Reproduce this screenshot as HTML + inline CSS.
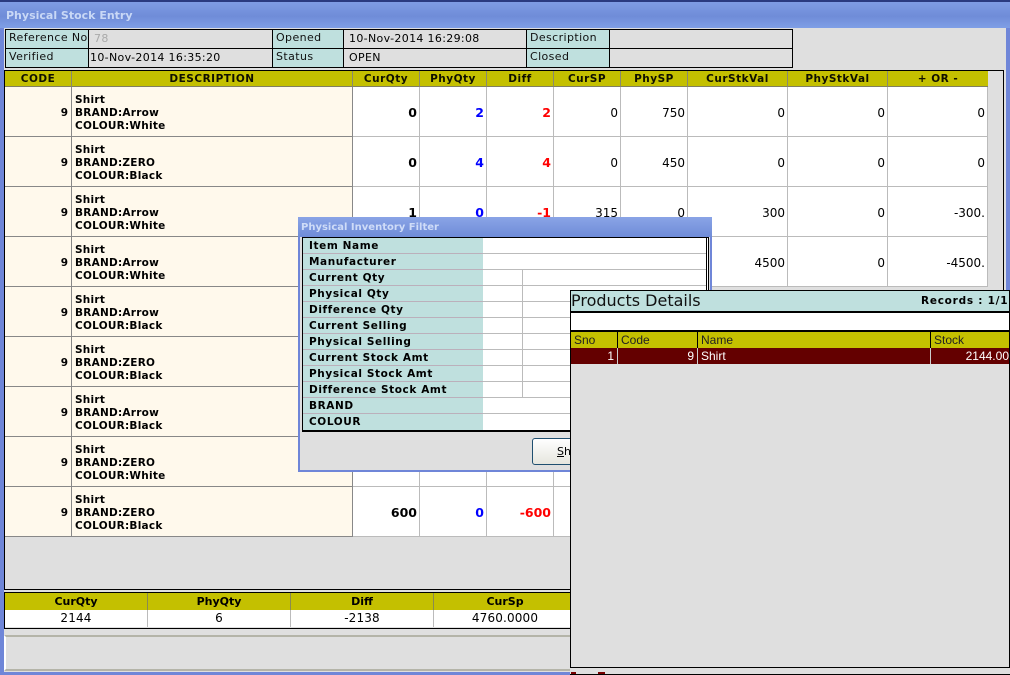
<!DOCTYPE html>
<html><head><meta charset="utf-8"><style>
*{box-sizing:border-box}
html,body{margin:0;padding:0;width:1010px;height:675px;overflow:hidden;background:#dfdfdf}
body{position:relative;font:11px "DejaVu Sans","Liberation Sans",sans-serif;color:#000}
div{position:absolute;white-space:nowrap}
.h{background:#c4c000;font-weight:bold;text-align:center;font-size:10.5px;line-height:17px;height:16px;top:71px;border-right:1px solid #8a8a70;border-bottom:1px solid #807f60;letter-spacing:.5px;color:#101000}
.c{height:50px;border-right:1px solid #bbb;border-bottom:1px solid #bbb;background:#fff;text-align:right;padding-right:2px;line-height:52px;font-size:12px}
.b{font-weight:bold;font-size:12.5px}
.d{background:#fff9ec;border-color:#888;color:#000}
.t{font-weight:bold;font-size:10.5px;line-height:13px;text-align:left;padding:6.5px 0 0 3px;letter-spacing:.25px}
.n{font-size:10.5px;padding-right:3px}
.k{font-size:11px;line-height:15px;padding-left:3px;border:1px solid #000;height:20px;letter-spacing:.4px}
.l{background:#bfe0de;color:#111}
.v{background:#dfdfdf;line-height:17px;padding-left:5px;letter-spacing:.33px}
.f{left:303px;width:180px;height:16px;background:#bfe0de;border-bottom:1px solid #bbb0bb;font-weight:bold;font-size:10.5px;line-height:17px;padding-left:6px;letter-spacing:.6px}
.g{left:483px;width:223px;height:16px;background:#fff;border-bottom:1px solid #bbb}
.y{background:#c4c000;color:#222;top:332px;height:16px;line-height:16px;padding-left:3px;border-right:1px solid #000;font-family:"Liberation Sans",sans-serif;font-size:12px}
.m{background:#640000;color:#fff;top:348px;height:16px;line-height:16px;font-family:"Liberation Sans",sans-serif;font-size:12px;border-right:1px solid #ccc}
.s{top:593px;height:17px;width:143px;background:#c4c000;font-weight:bold;font-size:11px;text-align:center;line-height:17px;border-right:1px solid #8a8a50}
.u{top:610px;height:17px;width:143px;background:#fff;text-align:center;line-height:17px;border-right:1px solid #bbb;font-size:12px;letter-spacing:.15px}
</style></head><body>
<div style="left:0;top:0;width:1010px;height:28px;background:linear-gradient(#7f9ce4 0,#6f8cd8 55%,#7f9fe6 100%);border-top:2px solid #2a3a80"></div>
<div style="left:6px;top:8px;color:#c9d8f6;font-weight:bold;font-size:11px;line-height:16px">Physical Stock Entry</div>
<div style="left:0;top:28px;width:4px;height:647px;background:#6f86d8"></div>
<div style="left:1006px;top:28px;width:4px;height:647px;background:#6f86d8"></div>
<div style="left:0;top:672px;width:1010px;height:3px;background:#6f86d8"></div>

<div class="k l" style="left:5px;top:29px;width:84px;">Reference No</div>
<div class="k v" style="left:88px;top:29px;width:185px;color:#aaa">78</div>
<div class="k l" style="left:272px;top:29px;width:72px;">Opened</div>
<div class="k v" style="left:343px;top:29px;width:184px;">10-Nov-2014 16:29:08</div>
<div class="k l" style="left:526px;top:29px;width:84px;">Description</div>
<div class="k v" style="left:609px;top:29px;width:184px;"></div>
<div class="k l" style="left:5px;top:48px;width:84px;">Verified</div>
<div class="k v" style="left:88px;top:48px;width:185px;padding-left:1px">10-Nov-2014 16:35:20</div>
<div class="k l" style="left:272px;top:48px;width:72px;">Status</div>
<div class="k v" style="left:343px;top:48px;width:184px;">OPEN</div>
<div class="k l" style="left:526px;top:48px;width:84px;">Closed</div>
<div class="k v" style="left:609px;top:48px;width:184px;"></div>

<div style="left:4px;top:70px;width:1000px;height:520px;border:1px solid #000"></div>
<div class="h" style="left:5px;width:67px">CODE</div><div class="h" style="left:72px;width:281px">DESCRIPTION</div><div class="h" style="left:353px;width:67px">CurQty</div><div class="h" style="left:420px;width:67px">PhyQty</div><div class="h" style="left:487px;width:67px">Diff</div><div class="h" style="left:554px;width:67px">CurSP</div><div class="h" style="left:621px;width:67px">PhySP</div><div class="h" style="left:688px;width:100px">CurStkVal</div><div class="h" style="left:788px;width:100px">PhyStkVal</div><div class="h" style="left:888px;width:100px;border-right:0">+ OR -</div>

<!-- row 1 -->
<div class="c d b n" style="left:5px;top:87px;width:67px">9</div><div class="c d t" style="left:72px;top:87px;width:281px">Shirt<br>BRAND:Arrow<br>COLOUR:White</div>
<div class="c b" style="left:353px;top:87px;width:67px">0</div><div class="c b" style="left:420px;top:87px;width:67px;color:#00f">2</div><div class="c b" style="left:487px;top:87px;width:67px;color:#f00">2</div><div class="c" style="left:554px;top:87px;width:67px">0</div><div class="c" style="left:621px;top:87px;width:67px">750</div><div class="c" style="left:688px;top:87px;width:100px">0</div><div class="c" style="left:788px;top:87px;width:100px">0</div><div class="c" style="left:888px;top:87px;width:100px">0</div>
<!-- row 2 -->
<div class="c d b n" style="left:5px;top:137px;width:67px">9</div><div class="c d t" style="left:72px;top:137px;width:281px">Shirt<br>BRAND:ZERO<br>COLOUR:Black</div>
<div class="c b" style="left:353px;top:137px;width:67px">0</div><div class="c b" style="left:420px;top:137px;width:67px;color:#00f">4</div><div class="c b" style="left:487px;top:137px;width:67px;color:#f00">4</div><div class="c" style="left:554px;top:137px;width:67px">0</div><div class="c" style="left:621px;top:137px;width:67px">450</div><div class="c" style="left:688px;top:137px;width:100px">0</div><div class="c" style="left:788px;top:137px;width:100px">0</div><div class="c" style="left:888px;top:137px;width:100px">0</div>
<!-- row 3 -->
<div class="c d b n" style="left:5px;top:187px;width:67px">9</div><div class="c d t" style="left:72px;top:187px;width:281px">Shirt<br>BRAND:Arrow<br>COLOUR:White</div>
<div class="c b" style="left:353px;top:187px;width:67px">1</div><div class="c b" style="left:420px;top:187px;width:67px;color:#00f">0</div><div class="c b" style="left:487px;top:187px;width:67px;color:#f00">-1</div><div class="c" style="left:554px;top:187px;width:67px">315</div><div class="c" style="left:621px;top:187px;width:67px">0</div><div class="c" style="left:688px;top:187px;width:100px">300</div><div class="c" style="left:788px;top:187px;width:100px">0</div><div class="c" style="left:888px;top:187px;width:100px">-300.</div>
<!-- row 4 -->
<div class="c d b n" style="left:5px;top:237px;width:67px">9</div><div class="c d t" style="left:72px;top:237px;width:281px">Shirt<br>BRAND:Arrow<br>COLOUR:White</div>
<div class="c" style="left:353px;top:237px;width:67px"></div><div class="c" style="left:420px;top:237px;width:67px"></div><div class="c" style="left:487px;top:237px;width:67px"></div><div class="c" style="left:554px;top:237px;width:67px"></div><div class="c" style="left:621px;top:237px;width:67px"></div><div class="c" style="left:688px;top:237px;width:100px">4500</div><div class="c" style="left:788px;top:237px;width:100px">0</div><div class="c" style="left:888px;top:237px;width:100px">-4500.</div>
<!-- rows 5-8 -->
<div class="c d b n" style="left:5px;top:287px;width:67px">9</div><div class="c d t" style="left:72px;top:287px;width:281px">Shirt<br>BRAND:Arrow<br>COLOUR:Black</div><div class="c" style="left:353px;top:287px;width:67px"></div><div class="c" style="left:420px;top:287px;width:67px"></div><div class="c" style="left:487px;top:287px;width:84px"></div>
<div class="c d b n" style="left:5px;top:337px;width:67px">9</div><div class="c d t" style="left:72px;top:337px;width:281px">Shirt<br>BRAND:ZERO<br>COLOUR:Black</div><div class="c" style="left:353px;top:337px;width:67px"></div><div class="c" style="left:420px;top:337px;width:67px"></div><div class="c" style="left:487px;top:337px;width:84px"></div>
<div class="c d b n" style="left:5px;top:387px;width:67px">9</div><div class="c d t" style="left:72px;top:387px;width:281px">Shirt<br>BRAND:Arrow<br>COLOUR:Black</div><div class="c" style="left:353px;top:387px;width:67px"></div><div class="c" style="left:420px;top:387px;width:67px"></div><div class="c" style="left:487px;top:387px;width:84px"></div>
<div class="c d b n" style="left:5px;top:437px;width:67px">9</div><div class="c d t" style="left:72px;top:437px;width:281px">Shirt<br>BRAND:ZERO<br>COLOUR:White</div><div class="c" style="left:353px;top:437px;width:67px"></div><div class="c" style="left:420px;top:437px;width:67px"></div><div class="c" style="left:487px;top:437px;width:67px"></div><div class="c" style="left:554px;top:437px;width:17px;border-right:0"></div>
<!-- row 9 -->
<div class="c d b n" style="left:5px;top:487px;width:67px">9</div><div class="c d t" style="left:72px;top:487px;width:281px">Shirt<br>BRAND:ZERO<br>COLOUR:Black</div>
<div class="c b" style="left:353px;top:487px;width:67px">600</div><div class="c b" style="left:420px;top:487px;width:67px;color:#00f">0</div><div class="c b" style="left:487px;top:487px;width:67px;color:#f00">-600</div><div class="c" style="left:554px;top:487px;width:17px;border-right:0"></div>

<!-- summary -->
<div style="left:4px;top:592px;width:600px;height:37px;border:1px solid #000"></div>
<div class="s" style="left:5px">CurQty</div><div class="s" style="left:148px">PhyQty</div><div class="s" style="left:291px">Diff</div><div class="s" style="left:434px">CurSp</div>
<div class="u" style="left:5px">2144</div><div class="u" style="left:148px">6</div><div class="u" style="left:291px">-2138</div><div class="u" style="left:434px">4760.0000</div>
<div style="left:4px;top:635px;width:1002px;height:36px;border:2px solid;border-color:#b4b4a8 #fff #b4b4a8 #fff"></div>

<!-- filter dialog -->
<div style="left:298px;top:217px;width:414px;height:255px;background:#dfdfdf;border:2px solid #6f86d8;border-top:0"></div>
<div style="left:298px;top:217px;width:414px;height:20px;background:linear-gradient(#8aa4e6,#6f8cd8)"></div>
<div style="left:301px;top:221px;color:#cfdcf8;font-weight:bold;font-size:10px;line-height:14px">Physical Inventory Filter</div>
<div style="left:302px;top:237px;width:407px;height:195px;background:#fff;border:1px solid #000;border-bottom-width:2px"></div>
<div style="left:706px;top:238px;width:1px;height:192px;background:#000"></div>
<div class="f" style="top:238px">Item Name</div><div class="g" style="top:238px"></div>
<div class="f" style="top:254px">Manufacturer</div><div class="g" style="top:254px"></div>
<div class="f" style="top:270px">Current Qty</div><div class="g" style="top:270px"></div>
<div class="f" style="top:286px">Physical Qty</div><div class="g" style="top:286px"></div>
<div class="f" style="top:302px">Difference Qty</div><div class="g" style="top:302px"></div>
<div class="f" style="top:318px">Current Selling</div><div class="g" style="top:318px"></div>
<div class="f" style="top:334px">Physical Selling</div><div class="g" style="top:334px"></div>
<div class="f" style="top:350px">Current Stock Amt</div><div class="g" style="top:350px"></div>
<div class="f" style="top:366px">Physical Stock Amt</div><div class="g" style="top:366px"></div>
<div class="f" style="top:382px">Difference Stock Amt</div><div class="g" style="top:382px"></div>
<div class="f" style="top:398px">BRAND</div><div class="g" style="top:398px"></div>
<div class="f" style="top:414px;border-bottom:0">COLOUR</div><div class="g" style="top:414px;border-bottom:0"></div>
<div style="left:522px;top:270px;width:1px;height:128px;background:#bbb"></div>
<div style="left:532px;top:438px;width:80px;height:27px;border:1px solid #1f4f70;border-radius:3px;background:linear-gradient(#fff,#e6e6de);font-size:11px;line-height:25px;padding-left:24px"><u>S</u>how</div>

<!-- products popup -->
<div style="left:570px;top:290px;width:440px;height:378px;background:#dfdfdf;border:1px solid #000;border-right:0"></div>
<div style="left:571px;top:291px;width:438px;height:20px;background:#bfe0de;font-size:16px;line-height:19px;color:#111">Products Details</div>
<div style="left:921px;top:294px;font-weight:bold;font-size:10.5px;line-height:14px;letter-spacing:.75px">Records : 1/1</div>
<div style="left:571px;top:311px;width:439px;height:2px;background:#000"></div>
<div style="left:571px;top:313px;width:439px;height:17px;background:#fff"></div>
<div style="left:571px;top:330px;width:439px;height:2px;background:#000"></div>
<div class="y" style="left:571px;width:47px">Sno</div><div class="y" style="left:618px;width:80px">Code</div><div class="y" style="left:698px;width:233px">Name</div><div class="y" style="left:931px;width:79px;border-right:0">Stock</div>
<div class="m" style="left:571px;width:47px;text-align:right;padding-right:3px">1</div><div class="m" style="left:618px;width:80px;text-align:right;padding-right:3px">9</div><div class="m" style="left:698px;width:233px;padding-left:3px">Shirt</div><div class="m" style="left:931px;width:79px;text-align:right;padding-right:1px;border-right:0">2144.00</div>
<div style="left:1009px;top:290px;width:1px;height:385px;background:#000"></div>
<div style="left:570px;top:667px;width:440px;height:8px;background:#dfdfdf;border-top:1px solid #000;border-bottom:1px solid #000"></div>
<div style="left:571px;top:672px;width:5px;height:2px;background:#700"></div>
<div style="left:598px;top:672px;width:7px;height:2px;background:#700"></div>
</body></html>
